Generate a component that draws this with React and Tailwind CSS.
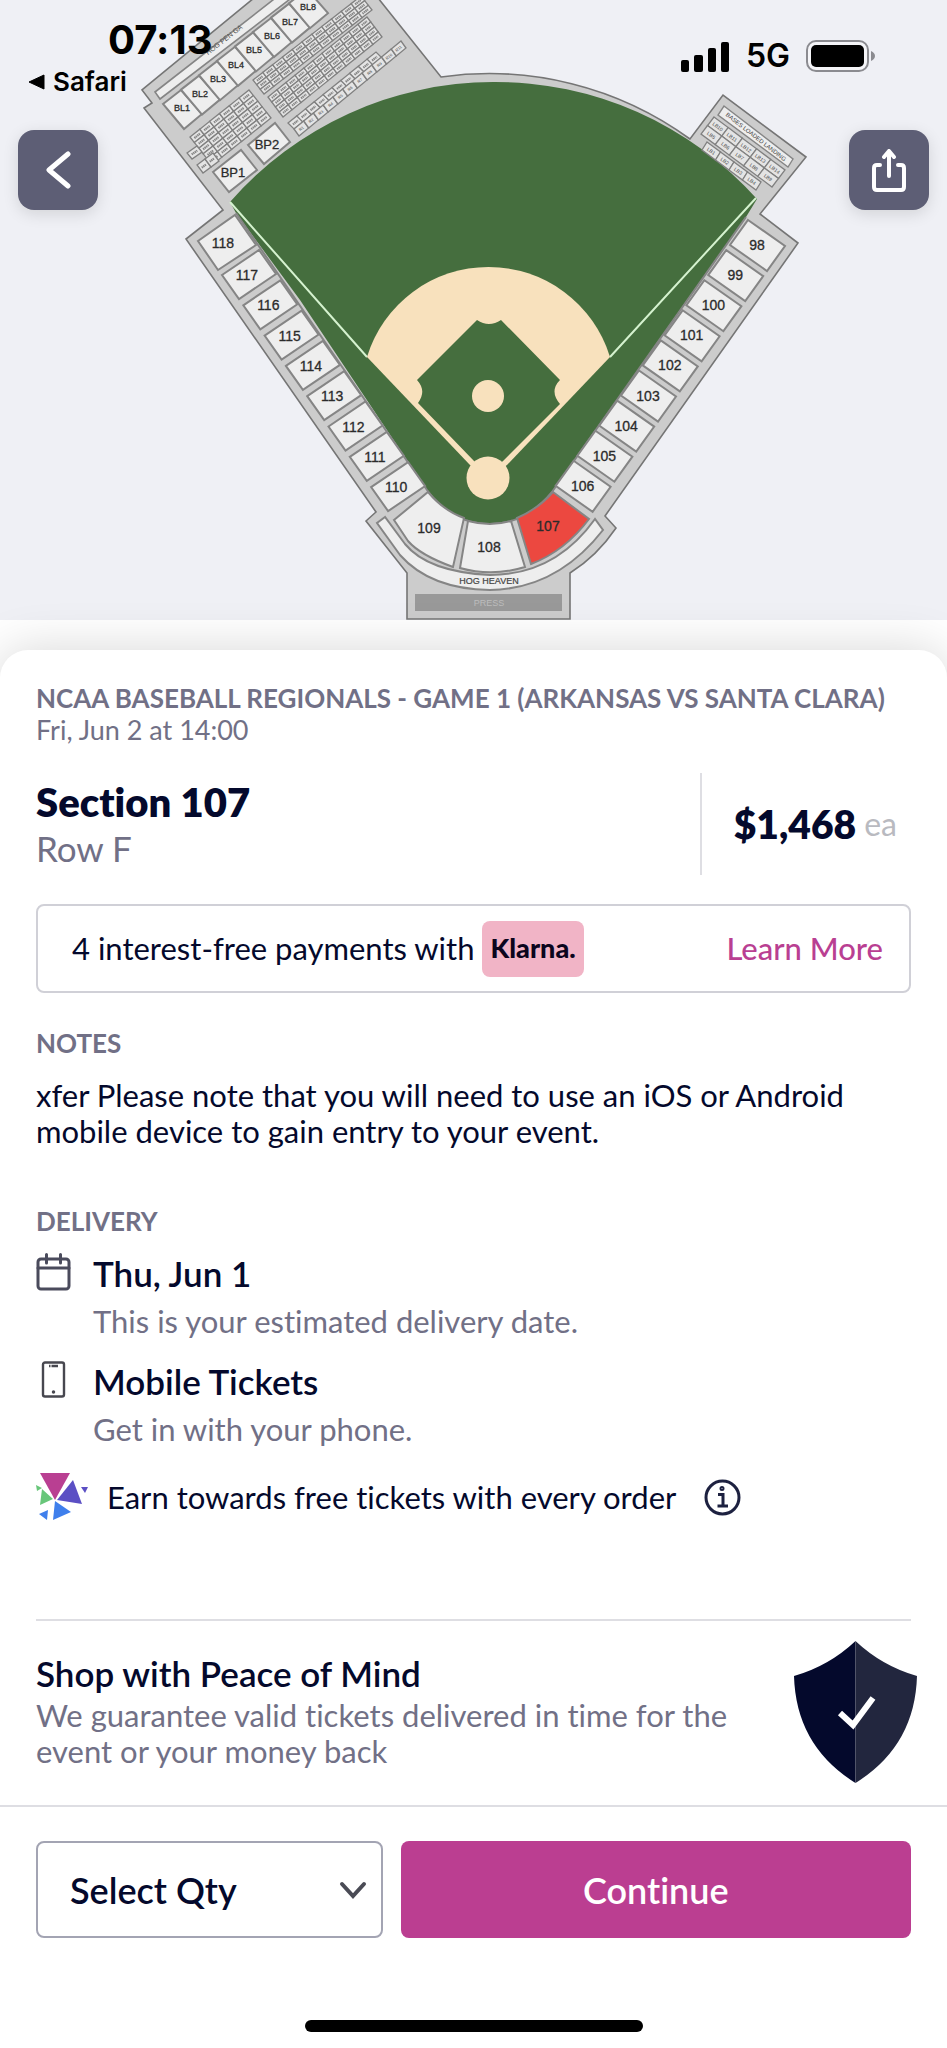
import { useState } from "react";

// Third base side, top to bottom. 118 is slightly larger and drawn apart.
const leftSections = [117, 116, 115, 114, 113, 112, 111, 110];
// First base side, top to bottom
const rightSections = [98, 99, 100, 101, 102, 103, 104, 105, 106];
const bullpenBoxes = ["BL1", "BL2", "BL3", "BL4", "BL5", "BL6", "BL7", "BL8"];

const toPoints = (list) => list.map((p) => p.join(",")).join(" ");

// Skewed block of small seats: origin plus two edge vectors split in cols and rows
function SeatGrid({ origin, u, v, cols, rows, labels, labelSize = 5 }) {
  const cells = [];
  for (let r = 0; r < rows; r++) {
    for (let c = 0; c < cols; c++) {
      const du = [u[0] / cols, u[1] / cols];
      const dv = [v[0] / rows, v[1] / rows];
      const x = origin[0] + du[0] * c + dv[0] * r;
      const y = origin[1] + du[1] * c + dv[1] * r;
      const angle = (Math.atan2(u[1], u[0]) * 180) / Math.PI;
      const cx = x + (du[0] + dv[0]) / 2;
      const cy = y + (du[1] + dv[1]) / 2;
      const label = labels?.[r * cols + c];
      cells.push(
        <g key={`${r}-${c}`}>
          <polygon
            points={toPoints([
              [x, y],
              [x + du[0], y + du[1]],
              [x + du[0] + dv[0], y + du[1] + dv[1]],
              [x + dv[0], y + dv[1]],
            ])}
            fill="#e4e4e4"
            stroke="#808080"
            strokeWidth="1.3"
          />
          {label ? (
            <text
              transform={`translate(${cx} ${cy}) rotate(${angle})`}
              textAnchor="middle"
              dominantBaseline="central"
              fontSize={labelSize}
              fill="#444"
            >
              {label}
            </text>
          ) : (
            <line
              x1={cx - du[0] * 0.28}
              y1={cy - du[1] * 0.28}
              x2={cx + du[0] * 0.28}
              y2={cy + du[1] * 0.28}
              stroke="#858585"
              strokeWidth="2.2"
              strokeDasharray="1.4 0.5"
            />
          )}
        </g>
      );
    }
  }
  return <g>{cells}</g>;
}

function Section({ points, x, y, label, size = 14 }) {
  return (
    <g>
      <polygon points={toPoints(points)} fill="#eeeeee" stroke="#858585" strokeWidth="2" />
      <text x={x} y={y} textAnchor="middle" dominantBaseline="central" fontSize={size} fill="#2b2b2b" stroke="#2b2b2b" strokeWidth="0.3">
        {label}
      </text>
    </g>
  );
}

function StadiumMap() {
  return (
    <svg viewBox="0 0 947 620" className="block w-full font-['Liberation_Sans',sans-serif]" role="img" aria-label="Seating map">
      {/* Stands */}
      <path
        d="M254 -2 L142 90 L152 103 L144 108 L223 210 L186 239 L376 512 L366 521 L407 573 V619 H570 V573 Q597 556 616 528 L605 516 L798 243 L760 214 L806 157 L723 95 L690 139 A341 341 0 0 0 441 77 L378 -2 Z"
        fill="#cccccc"
        stroke="#757575"
        strokeWidth="1.6"
      />

      {/* Outfield */}
      <path
        d="M230 202 A352 352 0 0 1 757 199 L746 217 L687 300 L552 492 Q526 524 490 524 Q452 524 427 490 L300 300 L236 213 Z"
        fill="#456e3e"
      />
      <path d="M746 217 L552 492 Q526 524 490 524 Q452 524 427 490 L236 213" fill="none" stroke="#858585" strokeWidth="2" />
      <path d="M230 202 L367 357 M756 198 L610 357" stroke="#d5f2cf" strokeWidth="2" />

      {/* Infield */}
      <path d="M367 357 A127 127 0 0 1 610 357 L507 465 L488 478 L470 465 Z" fill="#f8e1bd" />
      <path
        d="M477 320 Q489 328 501 320 L560 380 Q549 391 560 404 L503 461 L488 474 L474 461 L418 403 Q427 391 417 380 Z"
        fill="#456e3e"
      />
      <circle cx="488" cy="478" r="21.5" fill="#f8e1bd" />
      <circle cx="488" cy="396" r="16" fill="#f8e1bd" />

      {/* Bullpen corner */}
      <polygon points="155,92 278,-4 294,-4 160,99" fill="#eeeeee" stroke="#858585" strokeWidth="1.6" />
      <text transform="translate(243 28) rotate(-38)" textAnchor="end" fontSize="7" fill="#555">HOG PEN GA</text>
      {bullpenBoxes.map((label, i) => {
        const x = 163 + i * 18;
        const y = 104 - i * 14.4;
        return (
          <Section
            key={label}
            label={label}
            size={9}
            x={x + 19}
            y={y + 4}
            points={[[x, y], [x + 18, y - 14], [x + 39, y + 10], [x + 21, y + 25]]}
          />
        );
      })}
      <SeatGrid origin={[190, 137]} u={[59, -47]} v={[22, 28]} cols={6} rows={5} />
      <SeatGrid origin={[187, 153]} u={[10, -7]} v={[5, 6]} cols={1} rows={1} />
      <SeatGrid origin={[197, 165]} u={[16, -12]} v={[6, 8]} cols={2} rows={1} />
      <SeatGrid origin={[253, 80]} u={[108, -84]} v={[11, 14]} cols={11} rows={3} />
      <SeatGrid origin={[268, 97]} u={[99, -80]} v={[15, 20]} cols={11} rows={4} />
      <SeatGrid origin={[288, 123]} u={[88, -71]} v={[6, 6]} cols={10} rows={1} />
      <SeatGrid
        origin={[294, 129]}
        u={[107, -88]}
        v={[5, 7]}
        cols={11}
        rows={1}
        labelSize={4}
        labels={["R1", "R2", "R3", "R4", "R5", "R6", "R7", "R8", "R9", "R10", "R11"]}
      />
      <Section label="BP1" size={13} x={233} y={172} points={[[213, 172], [241, 150], [257, 170], [229, 192]]} />
      <Section label="BP2" size={13} x={267} y={144} points={[[248, 145], [275, 123], [290, 142], [264, 164]]} />

      {/* Bases loaded corner */}
      <polygon points="724,106 793,159 788,167 718,115" fill="#eeeeee" stroke="#858585" strokeWidth="1.4" />
      <text transform="translate(756 137) rotate(38)" textAnchor="middle" dominantBaseline="central" fontSize="6" fill="#444">
        BASES LOADED LANDING
      </text>
      <SeatGrid
        origin={[714, 117]}
        u={[71, 53]}
        v={[-13, 17]}
        cols={5}
        rows={2}
        labels={["LB10", "LB11", "LB12", "LB13", "LB14", "LB5", "LB6", "LB7", "LB8", "LB9"]}
      />
      <SeatGrid origin={[707, 142]} u={[54, 40]} v={[-5, 8]} cols={4} rows={1} labels={["LB1", "LB2", "LB3", "LB4"]} />

      {/* Foul line sections */}
      <Section label="118" x={223} y={243} points={[[198, 241], [235, 215], [256, 245], [218, 270]]} />
      {leftSections.map((num, i) => {
        const x = 222 + i * 21.3;
        const y = 275 + i * 30.3;
        return (
          <Section
            key={num}
            label={num}
            x={x + 25}
            y={y}
            points={[[x, y], [x + 37, y - 25], [x + 54, y - 1], [x + 17, y + 24]]}
          />
        );
      })}
      {rightSections.map((num, i) => {
        const x = 748 - i * 21.8;
        const y = 220 + i * 30.1;
        return (
          <Section
            key={num}
            label={num}
            x={x + 9}
            y={y + 25}
            points={[[x, y], [x + 37, y + 26], [x + 19, y + 51], [x - 18, y + 25]]}
          />
        );
      })}

      {/* Behind home plate */}
      <g stroke="#858585" strokeWidth="2" fill="#eeeeee">
        <path d="M394 520 L428 492 Q444 511 464 518 L453 567 Q420 555 408 541 Z" />
        <path d="M468 521 Q490 527 511 521 L525 567 Q492 577 460 568 Z" />
        <path d="M553 492 L589 519 Q565 551 531 564 L517 518 Q538 509 553 492 Z" fill="#ec4840" />
        <path d="M385 517 L377 523 L400 555 Q430 589 490 590 Q557 589 603 530 L595 519 Q555 575 490 575 Q428 572 405 544 Z" />
      </g>
      <g textAnchor="middle" fontSize="14" fill="#2b2b2b" stroke="#2b2b2b" strokeWidth="0.3">
        <text x="429" y="533">109</text>
        <text x="489" y="552">108</text>
        <text x="548" y="531">107</text>
      </g>
      <text x="489" y="584" textAnchor="middle" fontSize="9" fill="#444" stroke="#444" strokeWidth="0.2">HOG HEAVEN</text>
      <rect x="415" y="594" width="147" height="17" fill="#999999" />
      <text x="489" y="606" textAnchor="middle" fontSize="9" fill="#bdbdbd">PRESS</text>
    </svg>
  );
}

function StatusBar() {
  return (
    <div className="flex items-start justify-between pt-4 pr-18 pl-7 font-['Inter',sans-serif] text-black">
      <div>
        <p className="pl-20 text-[40px] leading-12 font-bold">07:13</p>
        <a href="#safari" className="flex items-center gap-2 text-[26px] leading-9 font-semibold">
          <svg width="17" height="16" viewBox="0 0 17 16" aria-hidden="true">
            <path d="M16 1 V15 L1 8 Z" fill="#000" stroke="#000" strokeLinejoin="round" />
          </svg>
          Safari
        </a>
      </div>
      <div className="flex items-center gap-4 pt-5">
        <svg width="49" height="31" viewBox="0 0 49 31" aria-hidden="true">
          <rect x="0" y="19" width="8" height="12" rx="2" />
          <rect x="13" y="14" width="9" height="17" rx="2" />
          <rect x="27" y="7" width="8" height="24" rx="2" />
          <rect x="40" y="1" width="8" height="30" rx="2" />
        </svg>
        <span className="text-[32px] leading-10 font-semibold">5G</span>
        <svg width="69" height="32" viewBox="0 0 69 32" aria-hidden="true">
          <rect x="1" y="1" width="61" height="30" rx="9" fill="#f5f5f8" stroke="#8b8b90" strokeWidth="2" />
          <rect x="5" y="5" width="53" height="22" rx="5" />
          <path d="M65 11 Q69 13 69 16 Q69 19 65 21 Z" fill="#8b8b90" />
        </svg>
      </div>
    </div>
  );
}

const mapButton =
  "flex size-20 items-center justify-center rounded-2xl bg-[#5d5e75] text-white shadow-[0_4px_16px_rgba(0,0,0,0.12)]";

function PinwheelIcon() {
  return (
    <svg width="53" height="48" viewBox="0 0 53 48" aria-hidden="true">
      <path d="M4 0 H34 L19 27 Z" fill="#b93f92" />
      <path d="M37 7 L46 31 L21 27 Z" fill="#5b4fc4" />
      <path d="M45 14 H52 L49 20 Z" fill="#5b4fc4" />
      <path d="M0 12 L6 15 L1 18 Z M6 16 L17 26 L4 32 Z" fill="#68c67a" />
      <path d="M19 28 L35 39 L17 47 Z M3 41 L12 37 L11 47 Z" fill="#3f7fec" />
    </svg>
  );
}

function DeliveryItem({ icon, title, text }) {
  return (
    <li className="grid grid-cols-[57px_1fr]">
      <span className="pt-1">{icon}</span>
      <div>
        <h3 className="text-[35px] leading-12 font-semibold">{title}</h3>
        <p className="text-[31px] leading-12 text-[#717086]">{text}</p>
      </div>
    </li>
  );
}

export default function App() {
  const [qty, setQty] = useState("");

  return (
    <div className="min-h-screen overflow-hidden bg-white font-['Lato',sans-serif] text-[#04092c] [font-variant-ligatures:none]">
      <header className="relative bg-[#eff0f5]">
        <StadiumMap />
        {/* Status bar and controls float over the map */}
        <div className="absolute inset-x-0 top-0">
          <StatusBar />
          <div className="flex justify-between px-[18px] pt-[30px]">
            <button type="button" aria-label="Back" className={mapButton}>
              <svg width="25" height="38" viewBox="0 0 25 38" fill="none" stroke="currentColor" strokeWidth="5" strokeLinecap="round" strokeLinejoin="round">
                <path d="M22 3 L3 19 L22 35" />
              </svg>
            </button>
            <button type="button" aria-label="Share" className={mapButton}>
              <svg width="34" height="43" viewBox="0 0 34 43" fill="none" stroke="currentColor" strokeWidth="4" strokeLinecap="round" strokeLinejoin="round">
                <path d="M8 16 H5 Q2 16 2 19 V38 Q2 41 5 41 H29 Q32 41 32 38 V19 Q32 16 29 16 H26" />
                <path d="M17 27 V4 M12 8 L17 2 L22 8" />
              </svg>
            </button>
          </div>
        </div>
      </header>

      <main className="relative mt-[30px] rounded-t-[28px] bg-white px-9 pt-[30px] pb-[22px] shadow-[0_0_50px_rgba(0,0,0,0.16)]">
        <h1 className="text-[26px] leading-9 font-bold text-[#717086] uppercase">
          NCAA Baseball Regionals - Game 1 (Arkansas vs Santa Clara)
        </h1>
        <p className="text-[27px] leading-7 text-[#717086]">Fri, Jun 2 at 14:00</p>

        <div className="mt-[29px] flex items-center justify-between">
          <div>
            <h2 className="text-[40px] leading-12 font-extrabold">Section 107</h2>
            <p className="text-[35px] leading-11 text-[#717086]">Row F</p>
          </div>
          <p className="flex h-[102px] items-center gap-2 border-l-2 border-[#dedee3] pr-3.5 pl-8">
            <span className="text-[39px] font-extrabold">$1,468</span>
            <span className="text-[32px] text-[#b9bac0]">ea</span>
          </p>
        </div>

        <div className="mt-[29px] flex h-[89px] items-center justify-between rounded-lg border-2 border-[#d0d0d7] pr-[26px] pl-[34px]">
          <p className="flex items-center gap-2 text-[31px]">
            4 interest-free payments with
            <span className="flex h-14 items-center rounded-lg bg-[#f1b4c6] px-2 text-[27px] font-black text-[#0b051d]">Klarna.</span>
          </p>
          <a href="#learn-more" className="text-[31px] font-medium text-[#b93f92]">Learn More</a>
        </div>

        <h2 className="mt-8 text-[26px] leading-9 font-bold text-[#717086]">NOTES</h2>
        <p className="mt-4 text-[31px] leading-9">
          xfer Please note that you will need to use an iOS or Android mobile device to gain entry to your event.
        </p>

        <h2 className="mt-[54px] text-[26px] leading-9 font-bold text-[#717086]">DELIVERY</h2>
        <ul className="mt-2.5 flex flex-col gap-3">
          <DeliveryItem
            title="Thu, Jun 1"
            text="This is your estimated delivery date."
            icon={
              <svg width="35" height="38" viewBox="0 0 35 38" fill="none" stroke="#4a4b5c" strokeWidth="3" strokeLinecap="round" aria-hidden="true">
                <rect x="2" y="6" width="31" height="30" rx="3" />
                <path d="M2 15 H33 M10.500 1.500 V10 M24.500 1.500 V10" />
              </svg>
            }
          />
          <DeliveryItem
            title="Mobile Tickets"
            text="Get in with your phone."
            icon={
              <svg width="35" height="38" viewBox="0 0 35 38" fill="none" stroke="#47474f" strokeWidth="2.4" aria-hidden="true">
                <rect x="7" y="1.500" width="21" height="34" rx="2" />
                <path d="M13 5 H14.500 M15.500 5 H22" />
                <circle cx="17.500" cy="31" r="1" fill="#47474f" strokeWidth="1.500" />
              </svg>
            }
          />
        </ul>

        <div className="mt-5 flex items-center">
          <PinwheelIcon />
          <p className="ml-[18px] text-[31px] leading-12">Earn towards free tickets with every order</p>
          <button type="button" aria-label="Rewards info" className="ml-7">
            <svg width="37" height="37" viewBox="0 0 37 37" fill="none" stroke="#1d2140" strokeWidth="3" aria-hidden="true">
              <circle cx="18.500" cy="18.500" r="16.500" />
              <path d="M14 15.500 H19 V27 M13.500 27 H24" />
              <circle cx="18" cy="9.500" r="1" />
            </svg>
          </button>
        </div>

        <section className="mt-[98px] flex justify-between border-t-2 border-[#dedee3] pt-5">
          <div className="pt-2">
            <h2 className="text-[35px] leading-12 font-semibold">Shop with Peace of Mind</h2>
            <p className="max-w-[720px] text-[31px] leading-9 text-[#717086]">
              We guarantee valid tickets delivered in time for the event or your money back
            </p>
          </div>
          <svg width="123" height="142" viewBox="0 0 123 142" className="-mr-1.5 shrink-0" aria-hidden="true">
            <path d="M61.500 0 Q35 25 0 35 Q2 105 61.500 142 Z" fill="#04092c" />
            <path d="M61.500 0 Q88 25 123 35 Q121 105 61.500 142 Z" fill="#22263e" />
            <path d="M46 72 L59 84 L79 57" fill="none" stroke="#fff" strokeWidth="6" />
          </svg>
        </section>
      </main>

      <footer className="relative border-t-2 border-[#dedee3] bg-white px-9 pt-[34px] pb-[18px]">
        <div className="grid grid-cols-[347fr_511fr] gap-[18px]">
          <div className="relative">
            <select
              aria-label="Select quantity"
              value={qty}
              onChange={(e) => setQty(e.target.value)}
              className="h-[97px] w-full appearance-none rounded-lg border-2 border-[#a3a4b3] bg-white pr-12 pl-8 text-[36px] font-semibold"
            >
              <option value="">Select Qty</option>
              <option value="1">1</option>
              <option value="2">2</option>
            </select>
            <svg width="28" height="18" viewBox="0 0 28 18" className="pointer-events-none absolute top-10 right-4" fill="none" stroke="#4a4b55" strokeWidth="4" strokeLinecap="round" aria-hidden="true">
              <path d="M3 3 L14 15 L25 3" />
            </svg>
          </div>
          <button type="button" className="h-[97px] rounded-lg bg-[#bb3e91] text-[36px] font-semibold text-white">
            Continue
          </button>
        </div>
        <div className="mx-auto mt-[82px] h-3 w-[338px] rounded-full bg-black" />
      </footer>
    </div>
  );
}
